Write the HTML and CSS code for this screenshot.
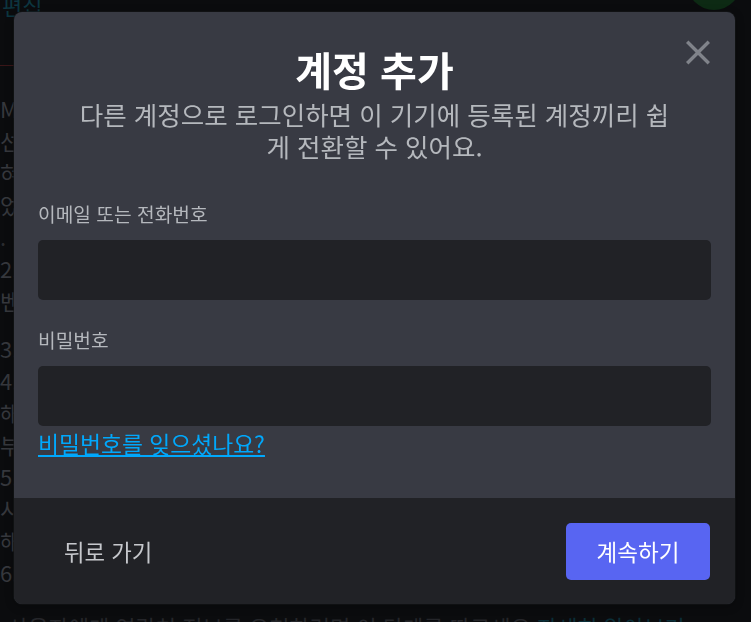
FILE: index.html
```html
<!DOCTYPE html>
<html lang="ko">
<head>
<meta charset="utf-8">
<title>계정 추가</title>
<link rel="stylesheet" href="styles.css">
</head>
<body>
<div class="page">
  <div class="topbar">
    <span class="edit-link">편집</span>
    <span class="topbar-gap"></span>
    <span class="avatar"></span>
  </div>
  <div class="rule"></div>
  <div class="article">
    <p>M.2 SSD를 설치한 후 부팅 순서를 확인하세요</p>
    <p>선택한 드라이브가 목록에 없다면 다시 연결하세요</p>
    <p>혀용된 장치만 표시됩니다</p>
    <p>었던 설정은 그대로 유지됩니다</p>
    <p class="blank">.</p>
    <p>2. 바이오스에 진입합니다</p>
    <p>벤더별 단축키를 누르세요</p>
    <p class="gap">3. 저장 후 재부팅합니다</p>
    <p>4. 드라이버를 설치합니다</p>
    <p>해당 항목을 선택하세요</p>
    <p>부팅이 완료될 때까지 기다리세요</p>
    <p>5. 업데이트를 확인합니다</p>
    <p>시스템을 다시 시작하세요</p>
    <p>해결되지 않으면 문의하세요</p>
    <p>6. 완료</p>
  </div>
  <div class="note">사용자에게 연락처 정보를 요청하려면 이 단계를 따르세요 <span class="note-link">자세히 알아보기</span></div>
</div>

<div class="backdrop">
  <div class="modal" role="dialog" aria-labelledby="modal-title">
    <div class="modal-header">
      <h1 class="title" id="modal-title">계정 추가</h1>
      <p class="subtitle">다른 계정으로 로그인하면 이 기기에 등록된 계정끼리 쉽게 전환할 수 있어요.</p>
      <button class="close" type="button" aria-label="닫기">
        <svg class="close-icon" viewBox="0 0 24 24" aria-hidden="true"><path fill="currentColor" d="M18.4 4L12 10.4 5.6 4 4 5.6 10.4 12 4 18.4 5.6 20 12 13.6 18.4 20 20 18.4 13.6 12 20 5.6z"/></svg>
      </button>
    </div>
    <div class="modal-body">
      <div class="field">
        <label class="field-label" for="login">이메일 또는 전화번호</label>
        <input class="field-input" id="login" type="text">
      </div>
      <div class="field">
        <label class="field-label" for="password">비밀번호</label>
        <input class="field-input" id="password" type="password">
      </div>
      <a class="forgot" href="#">비밀번호를 잊으셨나요?</a>
    </div>
    <div class="modal-footer">
      <button class="btn-back" type="button">뒤로 가기</button>
      <button class="btn-primary" type="button">계속하기</button>
    </div>
  </div>
</div>
</body>
</html>
```

FILE: styles.css
```css
* { box-sizing: border-box; }

html, body {
  margin: 0;
  padding: 0;
  height: 622px;
  overflow: hidden;
  background: #0b0c0e;
  font-family: "Noto Sans CJK KR", "Noto Sans", sans-serif;
}

/* dimmed page behind the modal */
.page {
  height: 622px;
  overflow: hidden;
  color: #36383d;
  font-size: 22px;
}

.topbar {
  height: 12px;
  display: flex;
  align-items: flex-end;
}

.edit-link {
  color: #0d3640;
  font-size: 22px;
  line-height: 22px;
  margin-left: 2px;
  margin-bottom: -4px;
}

.topbar-gap {
  flex: 1;
}

.avatar {
  width: 54px;
  height: 54px;
  border-radius: 50%;
  background: #0d2a14;
  margin-right: 10px;
  margin-bottom: 2px;
  flex-shrink: 0;
}

.rule {
  margin-top: 53px;
  width: 40px;
  height: 1px;
  background: #3a1618;
}

.article {
  margin-top: 26px;
  white-space: nowrap;
}

.article p {
  margin: 0;
  line-height: 32px;
}

.article .blank {
  color: #2a2b2f;
}

.article .gap {
  margin-top: 16px;
}

.note {
  margin-top: 27px;
  margin-left: 8px;
  white-space: nowrap;
  color: #25262a;
  line-height: 22px;
}

.note-link {
  color: #0a2e38;
}

/* modal overlay */
.backdrop {
  position: fixed;
  inset: 0;
  padding: 12px 0 0 14px;
}

.modal {
  position: relative;
  width: 721px;
  background: #383a43;
  border-radius: 8px;
  overflow: hidden;
  box-shadow: 0 0 0 1px rgba(20, 21, 24, 0.6), 0 2px 10px rgba(0, 0, 0, 0.3);
}

.modal-header {
  padding: 34px 24px 0;
  text-align: center;
}

.title {
  margin: 0;
  font-size: 40px;
  line-height: 46px;
  font-weight: 700;
  color: #ffffff;
}

.subtitle {
  margin: 6px auto 0;
  max-width: 596px;
  font-size: 25.5px;
  line-height: 32px;
  color: #b5b8bd;
}

.close {
  position: absolute;
  top: 22px;
  right: 19px;
  width: 36px;
  height: 36px;
  padding: 0;
  border: 0;
  background: none;
  color: #80838a;
  display: flex;
  align-items: center;
  justify-content: center;
}

.close-icon {
  width: 37px;
  height: 37px;
  display: block;
}

.modal-body {
  padding: 40px 24px 40px;
}

.field + .field {
  margin-top: 28px;
}

.field-label {
  display: block;
  font-size: 19.2px;
  line-height: 24px;
  color: #b5b8bd;
  margin-bottom: 14px;
}

.field-input {
  display: block;
  width: 100%;
  height: 60px;
  border: 0;
  border-radius: 5px;
  background: #212226;
  outline: none;
}

.forgot {
  display: inline-block;
  margin-top: 6px;
  font-size: 22.8px;
  line-height: 24px;
  color: #00a8fc;
  text-decoration: underline;
}

.modal-footer {
  height: 106px;
  padding: 0 25px 0 24px;
  background: #212226;
  display: flex;
  align-items: center;
  justify-content: space-between;
}

.btn-back {
  height: 57px;
  padding: 0 26px;
  border: 0;
  background: none;
  color: #c6c8cc;
  font-family: inherit;
  font-size: 22.3px;
}

.btn-primary {
  width: 144px;
  height: 57px;
  border: 0;
  border-radius: 5px;
  background: #5865f2;
  color: #ffffff;
  font-family: inherit;
  font-size: 22.5px;
}
```
